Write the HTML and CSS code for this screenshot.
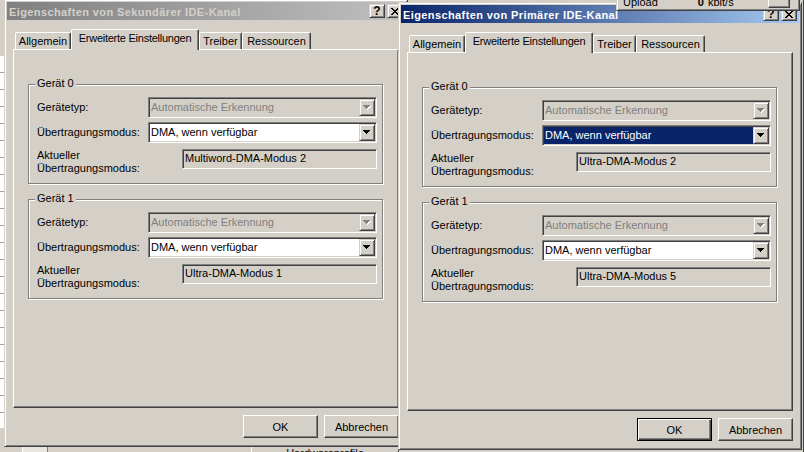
FILE: index.html
```html
<!DOCTYPE html>
<html lang="de">
<head>
  <meta charset="UTF-8">
  <title>Eigenschaften von IDE-Kanal</title>
  <link rel="stylesheet" href="styles.css">
</head>
<body>
  <!-- windows behind the two dialogs -->
  <div class="bg-tree"></div>
  <div class="bg-list"></div>
  <div class="bg-button">Hardwareprofile</div>
  <div class="bg-right"></div>

  <!-- Upload meter (on top) -->
  <div class="upload-window">
    <span class="up-label">Upload</span>
    <span class="up-value">0</span>
    <span class="up-unit">kbit/s</span>
    <span class="up-btn"></span>
  </div>

  <!-- Dialog: Sekundärer IDE-Kanal (inactive) -->
  <div class="dialog dialog-secondary">
    <div class="titlebar inactive">
      <span class="title">Eigenschaften von Sekundärer IDE-Kanal</span>
      <div class="caption-buttons">
        <span class="cap-btn">?</span>
        <span class="cap-btn">
          <svg width="8" height="7" shape-rendering="crispEdges"><rect x="0" y="0" width="2" height="1"/><rect x="6" y="0" width="2" height="1"/><rect x="1" y="1" width="2" height="1"/><rect x="5" y="1" width="2" height="1"/><rect x="2" y="2" width="4" height="1"/><rect x="3" y="3" width="2" height="1"/><rect x="2" y="4" width="4" height="1"/><rect x="1" y="5" width="2" height="1"/><rect x="5" y="5" width="2" height="1"/><rect x="0" y="6" width="2" height="1"/><rect x="6" y="6" width="2" height="1"/></svg>
        </span>
      </div>
    </div>
    <div class="dialog-body">
      <div class="tabs">
        <div class="tab tab-general">Allgemein</div>
        <div class="tab tab-advanced active">Erweiterte Einstellungen</div>
        <div class="tab tab-driver">Treiber</div>
        <div class="tab tab-resources">Ressourcen</div>
      </div>
      <div class="panel">
        <div class="group">
          <span class="group-title">Gerät 0</span>
          <div class="row">
            <span class="label">Gerätetyp:</span>
            <div class="combo disabled">
              <span class="combo-text">Automatische Erkennung</span>
              <span class="combo-btn"><svg width="8" height="5" shape-rendering="crispEdges"><g fill="#fff" transform="translate(1,1)"><rect x="0" y="0" width="7" height="1"/><rect x="1" y="1" width="5" height="1"/><rect x="2" y="2" width="3" height="1"/><rect x="3" y="3" width="1" height="1"/></g><g fill="#808080"><rect x="0" y="0" width="7" height="1"/><rect x="1" y="1" width="5" height="1"/><rect x="2" y="2" width="3" height="1"/><rect x="3" y="3" width="1" height="1"/></g></svg></span>
            </div>
          </div>
          <div class="row">
            <span class="label">Übertragungsmodus:</span>
            <div class="combo">
              <span class="combo-text">DMA, wenn verfügbar</span>
              <span class="combo-btn"><svg width="8" height="5" shape-rendering="crispEdges"><rect x="0" y="0" width="7" height="1"/><rect x="1" y="1" width="5" height="1"/><rect x="2" y="2" width="3" height="1"/><rect x="3" y="3" width="1" height="1"/></svg></span>
            </div>
          </div>
          <div class="row row-current">
            <span class="label">Aktueller<br>Übertragungsmodus:</span>
            <div class="readonly">Multiword-DMA-Modus 2</div>
          </div>
        </div>

        <div class="group">
          <span class="group-title">Gerät 1</span>
          <div class="row">
            <span class="label">Gerätetyp:</span>
            <div class="combo disabled">
              <span class="combo-text">Automatische Erkennung</span>
              <span class="combo-btn"><svg width="8" height="5" shape-rendering="crispEdges"><g fill="#fff" transform="translate(1,1)"><rect x="0" y="0" width="7" height="1"/><rect x="1" y="1" width="5" height="1"/><rect x="2" y="2" width="3" height="1"/><rect x="3" y="3" width="1" height="1"/></g><g fill="#808080"><rect x="0" y="0" width="7" height="1"/><rect x="1" y="1" width="5" height="1"/><rect x="2" y="2" width="3" height="1"/><rect x="3" y="3" width="1" height="1"/></g></svg></span>
            </div>
          </div>
          <div class="row">
            <span class="label">Übertragungsmodus:</span>
            <div class="combo">
              <span class="combo-text">DMA, wenn verfügbar</span>
              <span class="combo-btn"><svg width="8" height="5" shape-rendering="crispEdges"><rect x="0" y="0" width="7" height="1"/><rect x="1" y="1" width="5" height="1"/><rect x="2" y="2" width="3" height="1"/><rect x="3" y="3" width="1" height="1"/></svg></span>
            </div>
          </div>
          <div class="row row-current">
            <span class="label">Aktueller<br>Übertragungsmodus:</span>
            <div class="readonly">Ultra-DMA-Modus 1</div>
          </div>
        </div>
      </div>
      <div class="buttons">
        <span class="btn">OK</span>
        <span class="btn">Abbrechen</span>
      </div>
    </div>
  </div>

  <!-- Dialog: Primärer IDE-Kanal (active) -->
  <div class="dialog dialog-primary">
    <div class="titlebar">
      <span class="title">Eigenschaften von Primärer IDE-Kanal</span>
      <div class="caption-buttons">
        <span class="cap-btn">?</span>
        <span class="cap-btn">
          <svg width="8" height="7" shape-rendering="crispEdges"><rect x="0" y="0" width="2" height="1"/><rect x="6" y="0" width="2" height="1"/><rect x="1" y="1" width="2" height="1"/><rect x="5" y="1" width="2" height="1"/><rect x="2" y="2" width="4" height="1"/><rect x="3" y="3" width="2" height="1"/><rect x="2" y="4" width="4" height="1"/><rect x="1" y="5" width="2" height="1"/><rect x="5" y="5" width="2" height="1"/><rect x="0" y="6" width="2" height="1"/><rect x="6" y="6" width="2" height="1"/></svg>
        </span>
      </div>
    </div>
    <div class="dialog-body">
      <div class="tabs">
        <div class="tab tab-general">Allgemein</div>
        <div class="tab tab-advanced active">Erweiterte Einstellungen</div>
        <div class="tab tab-driver">Treiber</div>
        <div class="tab tab-resources">Ressourcen</div>
      </div>
      <div class="panel">
        <div class="group">
          <span class="group-title">Gerät 0</span>
          <div class="row">
            <span class="label">Gerätetyp:</span>
            <div class="combo disabled">
              <span class="combo-text">Automatische Erkennung</span>
              <span class="combo-btn"><svg width="8" height="5" shape-rendering="crispEdges"><g fill="#fff" transform="translate(1,1)"><rect x="0" y="0" width="7" height="1"/><rect x="1" y="1" width="5" height="1"/><rect x="2" y="2" width="3" height="1"/><rect x="3" y="3" width="1" height="1"/></g><g fill="#808080"><rect x="0" y="0" width="7" height="1"/><rect x="1" y="1" width="5" height="1"/><rect x="2" y="2" width="3" height="1"/><rect x="3" y="3" width="1" height="1"/></g></svg></span>
            </div>
          </div>
          <div class="row">
            <span class="label">Übertragungsmodus:</span>
            <div class="combo focused">
              <span class="combo-text">DMA, wenn verfügbar</span>
              <span class="combo-btn"><svg width="8" height="5" shape-rendering="crispEdges"><rect x="0" y="0" width="7" height="1"/><rect x="1" y="1" width="5" height="1"/><rect x="2" y="2" width="3" height="1"/><rect x="3" y="3" width="1" height="1"/></svg></span>
            </div>
          </div>
          <div class="row row-current">
            <span class="label">Aktueller<br>Übertragungsmodus:</span>
            <div class="readonly">Ultra-DMA-Modus 2</div>
          </div>
        </div>

        <div class="group">
          <span class="group-title">Gerät 1</span>
          <div class="row">
            <span class="label">Gerätetyp:</span>
            <div class="combo disabled">
              <span class="combo-text">Automatische Erkennung</span>
              <span class="combo-btn"><svg width="8" height="5" shape-rendering="crispEdges"><g fill="#fff" transform="translate(1,1)"><rect x="0" y="0" width="7" height="1"/><rect x="1" y="1" width="5" height="1"/><rect x="2" y="2" width="3" height="1"/><rect x="3" y="3" width="1" height="1"/></g><g fill="#808080"><rect x="0" y="0" width="7" height="1"/><rect x="1" y="1" width="5" height="1"/><rect x="2" y="2" width="3" height="1"/><rect x="3" y="3" width="1" height="1"/></g></svg></span>
            </div>
          </div>
          <div class="row">
            <span class="label">Übertragungsmodus:</span>
            <div class="combo">
              <span class="combo-text">DMA, wenn verfügbar</span>
              <span class="combo-btn"><svg width="8" height="5" shape-rendering="crispEdges"><rect x="0" y="0" width="7" height="1"/><rect x="1" y="1" width="5" height="1"/><rect x="2" y="2" width="3" height="1"/><rect x="3" y="3" width="1" height="1"/></svg></span>
            </div>
          </div>
          <div class="row row-current">
            <span class="label">Aktueller<br>Übertragungsmodus:</span>
            <div class="readonly">Ultra-DMA-Modus 5</div>
          </div>
        </div>
      </div>
      <div class="buttons">
        <span class="btn default">OK</span>
        <span class="btn">Abbrechen</span>
      </div>
    </div>
  </div>
</body>
</html>
```

FILE: styles.css
```css
* {
  box-sizing: border-box;
}

body {
  margin: 0;
  width: 804px;
  height: 452px;
  overflow: hidden;
  position: relative;
  background: #d4d0c8;
  font-family: "Liberation Sans", Arial, sans-serif;
  font-size: 11px;
  color: #000;
}

/* background windows */
.bg-tree {
  position: absolute;
  left: 0;
  top: 56px;
  width: 6px;
  height: 372px;
  background: repeating-linear-gradient(to bottom, #fff 0 16px, #a0a0a0 16px 17px);
}

.bg-list {
  position: absolute;
  left: 22px;
  top: 444px;
  width: 26px;
  height: 12px;
  border-left: 1px solid #fff;
  border-right: 1px solid #808080;
  background: #e8e6e0;
}

.bg-button {
  position: absolute;
  left: 251px;
  top: 446px;
  width: 148px;
  height: 24px;
  border: 1px solid;
  border-color: #fff #404040 #404040 #fff;
  text-align: center;
  line-height: 13px;
}

.bg-right {
  position: absolute;
  left: 801px;
  top: 0;
  width: 3px;
  height: 452px;
  border-right: 1px solid #404040;
  background: #d4d0c8;
}

/* upload meter */
.upload-window {
  position: absolute;
  left: 616px;
  top: -16px;
  width: 184px;
  height: 27px;
  z-index: 3;
  display: flex;
  align-items: flex-end;
  padding: 0 9px 1px 6px;
  background: #d4d0c8;
  border: 1px solid;
  border-color: #d4d0c8 #404040 #404040 #d4d0c8;
  box-shadow: inset 1px 1px #fff, inset -1px -1px #808080;
  line-height: 13px;
}

.up-value {
  margin-left: 40px;
  font-weight: bold;
}

.up-unit {
  margin-left: 4px;
}

.up-btn {
  margin-left: auto;
  width: 22px;
  height: 18px;
  margin-bottom: 1px;
  border: 1px solid;
  border-color: #fff #404040 #404040 #fff;
  box-shadow: inset -1px -1px #808080;
}

/* dialogs */
.dialog {
  position: absolute;
  width: 404px;
  height: 448px;
  display: flex;
  flex-direction: column;
  padding: 2px;
  background: #d4d0c8;
  border: 1px solid;
  border-color: #d4d0c8 #404040 #404040 #d4d0c8;
  box-shadow: inset 1px 1px #fff, inset -1px -1px #808080;
}

.dialog-secondary {
  left: 4px;
  top: -1px;
  z-index: 1;
}

.dialog-primary {
  left: 398px;
  top: 2px;
  z-index: 2;
}

.titlebar {
  height: 18px;
  flex-shrink: 0;
  display: flex;
  align-items: center;
  justify-content: space-between;
  padding: 0 2px 0 2px;
  background: linear-gradient(to right, #0a246a, #a6caf0);
  color: #fff;
}

.titlebar.inactive {
  background: linear-gradient(to right, #808080, #c0c0c0);
  color: #d4d0c8;
}

.title {
  font-weight: bold;
  letter-spacing: 0.4px;
  white-space: nowrap;
  line-height: 18px;
  padding-top: 1px;
}

.caption-buttons {
  display: flex;
  gap: 2px;
}

.cap-btn {
  width: 16px;
  height: 14px;
  display: flex;
  align-items: center;
  justify-content: center;
  background: #d4d0c8;
  color: #000;
  font-weight: bold;
  font-size: 12px;
  border: 1px solid;
  border-color: #d4d0c8 #404040 #404040 #d4d0c8;
  box-shadow: inset 1px 1px #fff, inset -1px -1px #808080;
}

.dialog-body {
  flex: 1;
  display: flex;
  flex-direction: column;
  padding: 9px 6px 0 6px;
}

/* tabs */
.tabs {
  height: 20px;
  display: flex;
  align-items: flex-end;
  padding-left: 2px;
  position: relative;
  z-index: 1;
}

.tab {
  height: 17px;
  line-height: 16px;
  text-align: center;
  white-space: nowrap;
  border: 1px solid;
  border-bottom: none;
  border-color: #fff #404040 transparent #fff;
  border-radius: 2px 2px 0 0;
  box-shadow: inset -1px 0 #808080;
  background: #d4d0c8;
}

.tab.active {
  height: 21px;
  line-height: 17px;
  margin-bottom: -1px;
}

.tab-general { width: 56px; }
.tab-advanced { width: 128px; letter-spacing: -0.25px; }
.tab-driver { width: 43px; }
.tab-resources { width: 69px; }

.panel {
  width: 386px;
  height: 359px;
  flex-shrink: 0;
  padding: 34px 0 0 14px;
  border: 1px solid;
  border-color: #fff #404040 #404040 #fff;
  box-shadow: inset -1px -1px #808080;
}

/* group boxes */
.group {
  position: relative;
  width: 355px;
  height: 100px;
  padding: 12px 5px 0 8px;
  border: 1px solid #808080;
  box-shadow: inset 1px 1px #fff, 1px 1px #fff;
}

.group + .group {
  margin-top: 15px;
}

.group-title {
  position: absolute;
  left: 6px;
  top: -8px;
  padding: 0 2px;
  line-height: 13px;
  background: #d4d0c8;
}

.row {
  display: flex;
  align-items: center;
}

.row + .row {
  margin-top: 4px;
}

.row.row-current {
  align-items: flex-start;
  margin-top: 6px;
}

.label {
  width: 111px;
  flex-shrink: 0;
  white-space: nowrap;
  line-height: 13px;
}

.row-current .label {
  width: 145px;
}

/* combo boxes */
.combo {
  width: 229px;
  height: 21px;
  display: flex;
  padding: 1px;
  background: #fff;
  border: 1px solid;
  border-color: #808080 #fff #fff #808080;
  box-shadow: inset 1px 1px #404040, inset -1px -1px #d4d0c8;
}

.combo-text {
  flex: 1;
  line-height: 17px;
  padding-left: 1px;
  white-space: nowrap;
  overflow: hidden;
}

.combo.disabled {
  background: #d4d0c8;
  color: #808080;
}

.combo.focused .combo-text {
  background: #0a246a;
  color: #fff;
}

.combo-btn {
  width: 16px;
  height: 17px;
  display: flex;
  align-items: center;
  justify-content: center;
  background: #d4d0c8;
  border: 1px solid;
  border-color: #d4d0c8 #404040 #404040 #d4d0c8;
  box-shadow: inset 1px 1px #fff, inset -1px -1px #808080;
}

.readonly {
  width: 195px;
  height: 20px;
  padding-left: 2px;
  line-height: 16px;
  white-space: nowrap;
  border: 1px solid;
  border-color: #808080 #fff #fff #808080;
  box-shadow: inset 1px 1px #404040, inset -1px -1px #d4d0c8;
}

/* push buttons */
.buttons {
  display: flex;
  justify-content: flex-end;
  gap: 6px;
  margin-top: 7px;
}

.btn {
  width: 75px;
  height: 23px;
  display: flex;
  align-items: center;
  justify-content: center;
  border: 1px solid;
  border-color: #fff #404040 #404040 #fff;
  box-shadow: inset -1px -1px #808080;
}

.btn.default {
  border-color: #000;
  box-shadow: inset 1px 1px #fff, inset -1px -1px #404040, inset -2px -2px #808080;
}
```
